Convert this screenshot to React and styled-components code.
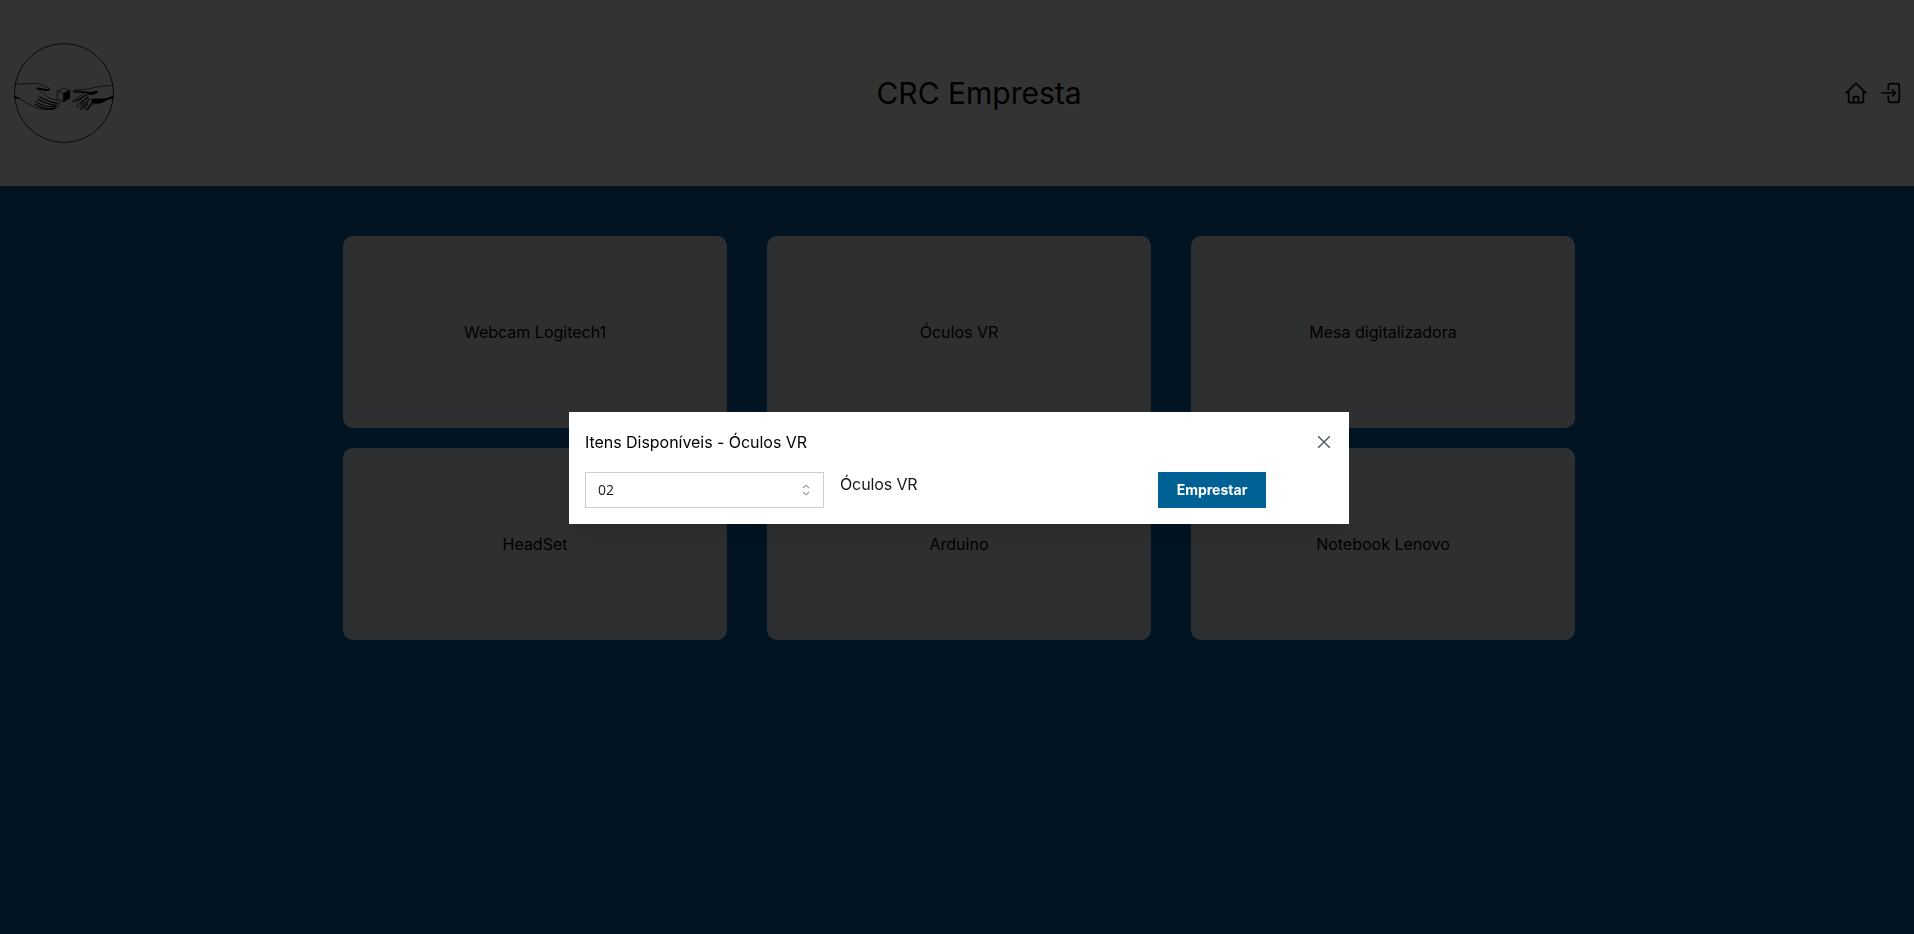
import React from "react";
import styled, { createGlobalStyle } from "styled-components";

const GlobalStyle = createGlobalStyle`
  * { box-sizing: border-box; }
  body {
    margin: 0;
    background: #0a5fac;
    font-family: Inter, "Liberation Sans", sans-serif;
    font-size: 16px;
    line-height: 24px;
    color: #000;
    overflow: hidden;
  }
  h1, p { margin: 0; font-weight: 400; }
`;

const Page = styled.div`
  height: 934px;
  display: flex;
  flex-direction: column;
  background: #0a5fac;
`;

const Header = styled.header`
  height: 186px;
  flex: none;
  display: flex;
  align-items: center;
  justify-content: space-between;
  padding: 0 10px 0 14px;
  background: #fff;
`;

const Title = styled.h1`
  font-size: 30px;
  line-height: 36px;
`;

const Nav = styled.nav`
  display: flex;
  gap: 12px;
  svg { display: block; }
`;

const Grid = styled.main`
  display: grid;
  grid-template-columns: repeat(3, 384px);
  grid-auto-rows: 192px;
  gap: 20px 40px;
  padding: 50px 0 0 343px;
`;

const Card = styled.article`
  display: flex;
  align-items: center;
  justify-content: center;
  border-radius: 10px;
  background: #e6ebf0;
`;

const Overlay = styled.div`
  position: fixed;
  inset: 0;
  display: flex;
  align-items: flex-start;
  justify-content: center;
  padding: 412px 0 0 4px;
  background: rgba(0, 0, 0, 0.8);
`;

const Dialog = styled.section`
  width: 780px;
  height: 112px;
  padding: 16px;
  background: #fff;
  box-shadow: 0 20px 25px -5px rgba(0, 0, 0, 0.1), 0 8px 10px -6px rgba(0, 0, 0, 0.1);
`;

const DialogHead = styled.div`
  height: 28px;
  display: flex;
  align-items: center;
  justify-content: space-between;
  margin-bottom: 16px;
`;

const DialogTitle = styled.h2`
  margin: 0;
  font-size: 16px;
  font-weight: 400;
  line-height: 28px;
  letter-spacing: -0.04px;
`;

const CloseButton = styled.button`
  display: flex;
  margin-right: 2px;
  padding: 0;
  border: 0;
  background: none;
  color: #4b5563;
`;

const DialogRow = styled.div`
  display: grid;
  grid-template-columns: 239px 302px 108px;
  gap: 16px;
`;

const Select = styled.div`
  height: 36px;
  display: flex;
  align-items: center;
  justify-content: space-between;
  padding: 0 13px 0 12px;
  border: 1px solid #cacdd5;
  font-family: "Open Sans", "Noto Sans", sans-serif;
  font-size: 14px;
  line-height: 20px;
  color: #1b1b1f;
`;

const ItemName = styled.p`
  color: #18181b;
  letter-spacing: -0.12px;
`;

const PrimaryButton = styled.button`
  height: 36px;
  padding: 0;
  border: 0;
  background: #006194;
  color: #fff;
  font: 700 14px/20px Inter, "Liberation Sans", sans-serif;
`;

const Logo = () => (
  <svg width="100" height="100" viewBox="42 39 300 300" fill="none" stroke="#000" strokeWidth="2" strokeLinejoin="round" strokeLinecap="round">
    <circle cx="192" cy="189" r="148.5" strokeWidth="2.5" />
    <path strokeWidth="2" d="M46 163C65 162 89 161 111 160C125 163 132 170 145 173C150 176 150 180 144 181C133 182 121 176 110 174C122 182 132 192 143 201C153 208 164 207 174 212C180 216 180 224 175 228C169 237 148 240 130 238C102 236 77 216 60 206L44 202" />
    <path strokeWidth="5" d="M112 175C124 176 134 182 147 179M44 200L55 204" />
    <path strokeWidth="3.4" d="M119 200C136 210 149 217 172 220M113 207C130 218 146 224 170 226M107 214C124 227 144 232 166 230M105 222C122 234 146 239 166 235" />
    <path strokeWidth="2" d="M172 184L190 175L209 181L209 205L191 215L173 207ZM172 184L191 190L209 181M191 190V215" />
    <path fill="#000" d="M192 191L208 183V204L192 213Z" />
    <path strokeWidth="2" d="M339 165C316 168 291 170 273 175C258 179 239 178 224 181C219 182 219 187 225 188C237 187 248 188 258 188C245 195 229 202 218 212C217 218 222 219 227 214L245 205C238 214 232 222 230 229C233 234 238 230 242 224L252 216C247 224 241 232 241 239C245 242 251 236 263 220C261 228 255 236 257 241C262 243 273 229 284 219C306 222 320 207 339 202" />
    <path strokeWidth="3.6" d="M222 183L246 185L272 188L291 184M259 188L276 193L292 187M260 195L225 213M264 201L242 219M268 207L248 232M277 216L262 238" />
    <path fill="#000" stroke="none" d="M256 186L276 187L291 183L279 194L263 193ZM271 208C288 204 304 207 317 205C327 202 333 198 341 197V204L320 210C307 222 287 223 270 218L278 213Z" />
  </svg>
);

const HomeIcon = () => (
  <svg width="24" height="24" viewBox="0 0 24 24" fill="none" stroke="#000" strokeWidth="1.7" strokeLinecap="round" strokeLinejoin="round">
    <path d="M2.4 11.8L11.2 3Q12 2.4 12.8 3L21.6 11.8M4.6 10V20.2Q4.6 21.6 6 21.6H18Q19.4 21.6 19.4 20.2V10M9.5 21.4V16.6Q9.5 15.6 10.5 15.6H13.5Q14.5 15.6 14.5 16.6V21.4" />
  </svg>
);

const EnterIcon = () => (
  <svg width="24" height="24" viewBox="0 0 24 24" fill="none" stroke="#000" strokeWidth="1.7" strokeLinecap="round" strokeLinejoin="round">
    <path d="M8.3 8.7V5.1Q8.3 2.7 10.7 2.7H16.9Q19.3 2.7 19.3 5.1V18.9Q19.3 21.3 16.9 21.3H10.7Q8.3 21.3 8.3 18.9V15.3M1.8 12H15.2M12.4 9L15.4 12L12.4 15" />
  </svg>
);

const Chevrons = () => (
  <svg width="8" height="12" viewBox="0 0 8 12" fill="none" stroke="#9095a0" strokeWidth="1.1">
    <path d="M1 4L4 1.2L7 4M1 8L4 10.8L7 8" />
  </svg>
);

const CloseIcon = () => (
  <svg width="14" height="14" viewBox="0 0 14 14" fill="none" stroke="currentColor" strokeWidth="1.4">
    <path d="M1.2 1.2L12.8 12.8M12.8 1.2L1.2 12.8" />
  </svg>
);

const items = ["Webcam Logitech1", "Óculos VR", "Mesa digitalizadora", "HeadSet", "Arduino", "Notebook Lenovo"];

export default function App() {
  return (
    <>
      <GlobalStyle />
      <Page>
        <Header>
          <Logo />
          <Title>CRC Empresta</Title>
          <Nav>
            <HomeIcon />
            <EnterIcon />
          </Nav>
        </Header>
        <Grid>
          {items.map((item) => <Card key={item}>{item}</Card>)}
        </Grid>
      </Page>
      <Overlay>
        <Dialog role="dialog" aria-modal="true">
          <DialogHead>
            <DialogTitle>Itens Disponíveis - Óculos VR</DialogTitle>
            <CloseButton aria-label="Fechar">
              <CloseIcon />
            </CloseButton>
          </DialogHead>
          <DialogRow>
            <Select>02<Chevrons /></Select>
            <ItemName>Óculos VR</ItemName>
            <PrimaryButton>Emprestar</PrimaryButton>
          </DialogRow>
        </Dialog>
      </Overlay>
    </>
  );
}
